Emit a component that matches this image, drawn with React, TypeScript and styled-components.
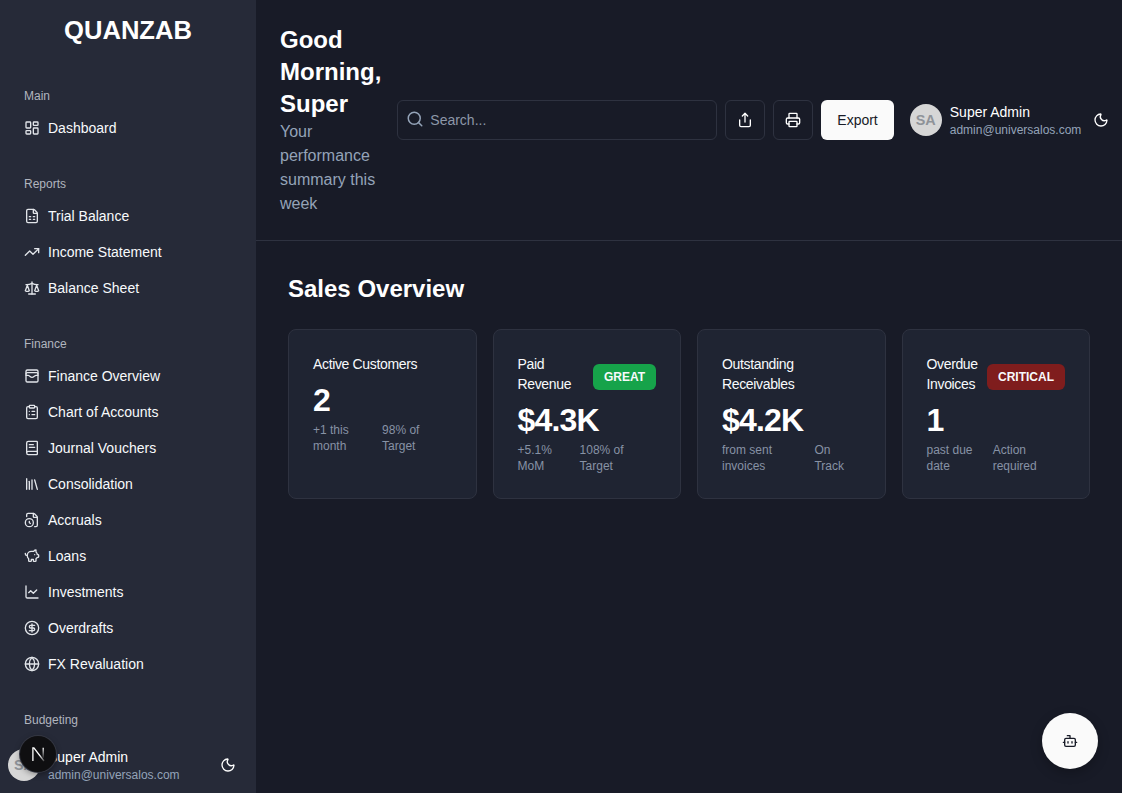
import styled, { createGlobalStyle } from "styled-components";
import {
  Bot,
  BookText,
  ChartLine,
  CircleDollarSign,
  ClipboardList,
  FileClock,
  FileSpreadsheet,
  Globe,
  LayoutDashboard,
  Library,
  Moon,
  PiggyBank,
  Printer,
  Scale,
  Search,
  Share,
  TrendingUp,
  WalletCards,
} from "lucide-react";

const GlobalStyle = createGlobalStyle`
  * { box-sizing: border-box; }
  html, body { margin: 0; height: 100%; overflow: hidden; }
  body {
    background: #181b27;
    color: #f8fafc;
    font-family: "Liberation Sans", Arial, sans-serif;
  }
`;

const navSections = [
  { title: "Main", items: [{ label: "Dashboard", icon: LayoutDashboard }] },
  {
    title: "Reports",
    items: [
      { label: "Trial Balance", icon: FileSpreadsheet },
      { label: "Income Statement", icon: TrendingUp },
      { label: "Balance Sheet", icon: Scale },
    ],
  },
  {
    title: "Finance",
    items: [
      { label: "Finance Overview", icon: WalletCards },
      { label: "Chart of Accounts", icon: ClipboardList },
      { label: "Journal Vouchers", icon: BookText },
      { label: "Consolidation", icon: Library },
      { label: "Accruals", icon: FileClock },
      { label: "Loans", icon: PiggyBank },
      { label: "Investments", icon: ChartLine },
      { label: "Overdrafts", icon: CircleDollarSign },
      { label: "FX Revaluation", icon: Globe },
    ],
  },
  { title: "Budgeting", items: [] },
];

const stats = [
  { title: "Active Customers", value: "2", left: "+1 this month", right: "98% of Target" },
  { title: "Paid Revenue", value: "$4.3K", left: "+5.1% MoM", right: "108% of Target", badge: "GREAT", tone: "good" },
  { title: "Outstanding Receivables", value: "$4.2K", left: "from sent invoices", right: "On Track" },
  { title: "Overdue Invoices", value: "1", left: "past due date", right: "Action required", badge: "CRITICAL", tone: "bad" },
];

const Layout = styled.div`
  display: flex;
  height: 100vh;
  overflow: hidden;
`;

const Sidebar = styled.aside`
  width: 256px;
  flex-shrink: 0;
  display: flex;
  flex-direction: column;
  background: #262a38;
`;

const Logo = styled.div`
  height: 60px;
  margin-bottom: 28px;
  display: flex;
  align-items: center;
  justify-content: center;
  font-size: 25.6px;
  font-weight: 700;
  color: #fff;
`;

const Nav = styled.nav`
  flex: 1;
  min-height: 0;
  overflow: hidden;
`;

const NavSection = styled.section`
  margin-bottom: 30px;
`;

const SectionLabel = styled.div`
  padding: 0 24px;
  margin-bottom: 6px;
  font-size: 12px;
  line-height: 16px;
  color: #b1b5bf;
`;

const NavItem = styled.a`
  height: 36px;
  padding: 0 24px;
  display: flex;
  align-items: center;
  gap: 8px;
  font-size: 14px;
  color: #f8fafc;

  svg {
    color: #e2e5ea;
    flex-shrink: 0;
  }
`;

const SidebarFooter = styled.div`
  padding: 10px 20px 10px 8px;
  display: flex;
  align-items: center;
  gap: 8px;
`;

const Avatar = styled.div`
  width: 32px;
  height: 32px;
  flex-shrink: 0;
  border-radius: 50%;
  background: #d6d6d6;
  color: #8f9399;
  display: flex;
  align-items: center;
  justify-content: center;
  font-size: 14.4px;
  font-weight: 700;
`;

const UserText = styled.div<{ $grow?: boolean }>`
  flex: ${(props) => (props.$grow ? 1 : "none")};
  min-width: 0;
`;

const UserName = styled.div`
  font-size: 14px;
  line-height: 20px;
  color: #fff;
`;

const UserEmail = styled.div`
  font-size: 12px;
  line-height: 16px;
  color: #94a3b8;
`;

const Main = styled.main`
  flex: 1;
  min-width: 0;
`;

const Header = styled.header`
  height: 241px;
  padding: 24px;
  display: flex;
  align-items: center;
  gap: 16px;
  border-bottom: 1px solid #2e3240;
`;

const Greeting = styled.div`
  width: min-content;
  flex-shrink: 0;
`;

const GreetingTitle = styled.h1`
  margin: 0;
  font-size: 24px;
  line-height: 32px;
  font-weight: 700;
  color: #fff;
`;

const GreetingSub = styled.p`
  margin: 0;
  font-size: 16px;
  line-height: 24px;
  color: #94a3b8;
`;

const Actions = styled.div`
  display: flex;
  align-items: center;
  gap: 8px;
`;

const SearchBox = styled.label`
  width: 320px;
  height: 40px;
  padding: 0 8px;
  display: flex;
  align-items: center;
  gap: 6px;
  border: 1px solid #2e3240;
  border-radius: 6px;
  color: #94a3b8;

  svg {
    flex-shrink: 0;
    margin-top: -2px;
  }
`;

const SearchInput = styled.input`
  flex: 1;
  min-width: 0;
  padding: 0;
  border: none;
  outline: none;
  background: none;
  font: inherit;
  font-size: 14px;
  color: #f8fafc;

  &::placeholder {
    color: #8d97a9;
    opacity: 1;
  }
`;

const IconButton = styled.button`
  width: 40px;
  height: 40px;
  padding: 0;
  display: flex;
  align-items: center;
  justify-content: center;
  background: none;
  border: 1px solid #2e3240;
  border-radius: 6px;
  color: #fff;
`;

const ExportButton = styled.button`
  height: 40px;
  padding: 0 16px;
  background: #fafafa;
  border: none;
  border-radius: 6px;
  font: inherit;
  font-size: 14px;
  color: #181b27;
`;

const HeaderUser = styled.div`
  display: flex;
  align-items: center;
  gap: 8px;
`;

const ThemeIcon = styled(Moon)`
  flex-shrink: 0;
  color: #fff;
`;

const HeaderTheme = styled(ThemeIcon)`
  margin-left: 4px;
`;

const Content = styled.div`
  padding: 32px;
`;

const PageTitle = styled.h2`
  margin: 0 0 24px;
  font-size: 24px;
  line-height: 32px;
  font-weight: 700;
  color: #fff;
`;

const CardGrid = styled.div`
  display: grid;
  grid-template-columns: repeat(4, minmax(0, 1fr));
  gap: 16px;
`;

const Card = styled.article`
  height: 170px;
  padding: 24px;
  background: #1f2432;
  border: 1px solid #2e3240;
  border-radius: 8px;
`;

const CardHead = styled.div`
  display: flex;
  align-items: center;
  justify-content: space-between;
  gap: 8px;
`;

const CardTitle = styled.h3`
  margin: 0;
  font-size: 14px;
  line-height: 20px;
  font-weight: 400;
  letter-spacing: -0.35px;
  color: #f8fafc;
`;

const Badge = styled.span<{ $tone?: string }>`
  flex-shrink: 0;
  margin-top: 6px;
  padding: 5px 11px;
  border-radius: 6px;
  font-size: 12px;
  line-height: 16px;
  font-weight: 700;
  color: #f8fafc;
  background: ${(props) => (props.$tone === "good" ? "#16a34a" : "#7f1d1d")};
`;

const CardValue = styled.div`
  margin-top: 6px;
  font-size: 32px;
  line-height: 40px;
  font-weight: 700;
  letter-spacing: -0.8px;
  color: #fff;
`;

const CardMeta = styled.div`
  margin-top: 2px;
  display: flex;
  gap: 1px;
  font-size: 12px;
  line-height: 16px;
  color: #8792a5;
`;

const Fab = styled.button`
  position: fixed;
  right: 24px;
  bottom: 24px;
  width: 56px;
  height: 56px;
  padding: 0;
  display: flex;
  align-items: center;
  justify-content: center;
  border: none;
  border-radius: 50%;
  background: #fafafa;
  box-shadow: 0 4px 12px rgba(0, 0, 0, 0.25);
  color: #181b27;
`;

const DevBadge = styled.div`
  position: fixed;
  left: 20px;
  bottom: 21px;
  width: 36px;
  height: 36px;
  border-radius: 50%;
  background: #0f0f11;
  box-shadow: 0 0 0 1px #343742, 0 2px 6px rgba(0, 0, 0, 0.4);
`;

const NextMark = () => (
  <svg width="36" height="36" viewBox="0 0 36 36" fill="none">
    <defs>
      <linearGradient id="next-diagonal" x1="13" y1="12" x2="24" y2="26" gradientUnits="userSpaceOnUse">
        <stop offset="0.55" stopColor="#fff" />
        <stop offset="1" stopColor="#fff" stopOpacity="0.15" />
      </linearGradient>
      <linearGradient id="next-stem" x1="23" y1="12" x2="23" y2="22" gradientUnits="userSpaceOnUse">
        <stop offset="0" stopColor="#fff" />
        <stop offset="1" stopColor="#fff" stopOpacity="0.1" />
      </linearGradient>
    </defs>
    <path d="M12.9 25V11.8H13.9L24 25" stroke="url(#next-diagonal)" strokeWidth="1.3" />
    <path d="M23.2 11.8V22" stroke="url(#next-stem)" strokeWidth="1.3" />
  </svg>
);

const App = () => {
  return (
    <Layout>
      <GlobalStyle />
      <Sidebar>
        <Logo>QUANZAB</Logo>
        <Nav>
          {navSections.map((section) => (
            <NavSection key={section.title}>
              <SectionLabel>{section.title}</SectionLabel>
              {section.items.map(({ label, icon: Icon }) => (
                <NavItem key={label}>
                  <Icon size={16} />
                  {label}
                </NavItem>
              ))}
            </NavSection>
          ))}
        </Nav>
        <SidebarFooter>
          <Avatar>SA</Avatar>
          <UserText $grow>
            <UserName>Super Admin</UserName>
            <UserEmail>admin@universalos.com</UserEmail>
          </UserText>
          <ThemeIcon size={16} />
        </SidebarFooter>
      </Sidebar>

      <Main>
        <Header>
          <Greeting>
            <GreetingTitle>Good Morning, Super</GreetingTitle>
            <GreetingSub>Your performance summary this week</GreetingSub>
          </Greeting>
          <Actions>
            <SearchBox>
              <Search size={18} />
              <SearchInput placeholder="Search..." />
            </SearchBox>
            <IconButton aria-label="Share">
              <Share size={16} />
            </IconButton>
            <IconButton aria-label="Print">
              <Printer size={16} />
            </IconButton>
            <ExportButton>Export</ExportButton>
          </Actions>
          <HeaderUser>
            <Avatar>SA</Avatar>
            <UserText>
              <UserName>Super Admin</UserName>
              <UserEmail>admin@universalos.com</UserEmail>
            </UserText>
            <HeaderTheme size={16} />
          </HeaderUser>
        </Header>

        <Content>
          <PageTitle>Sales Overview</PageTitle>
          <CardGrid>
            {stats.map((stat) => (
              <Card key={stat.title}>
                <CardHead>
                  <CardTitle>{stat.title}</CardTitle>
                  {stat.badge && <Badge $tone={stat.tone}>{stat.badge}</Badge>}
                </CardHead>
                <CardValue>{stat.value}</CardValue>
                <CardMeta>
                  <span>{stat.left}</span>
                  <span>{stat.right}</span>
                </CardMeta>
              </Card>
            ))}
          </CardGrid>
        </Content>
      </Main>

      <DevBadge>
        <NextMark />
      </DevBadge>
      <Fab aria-label="Assistant">
        <Bot size={16} />
      </Fab>
    </Layout>
  );
};

export default App;
